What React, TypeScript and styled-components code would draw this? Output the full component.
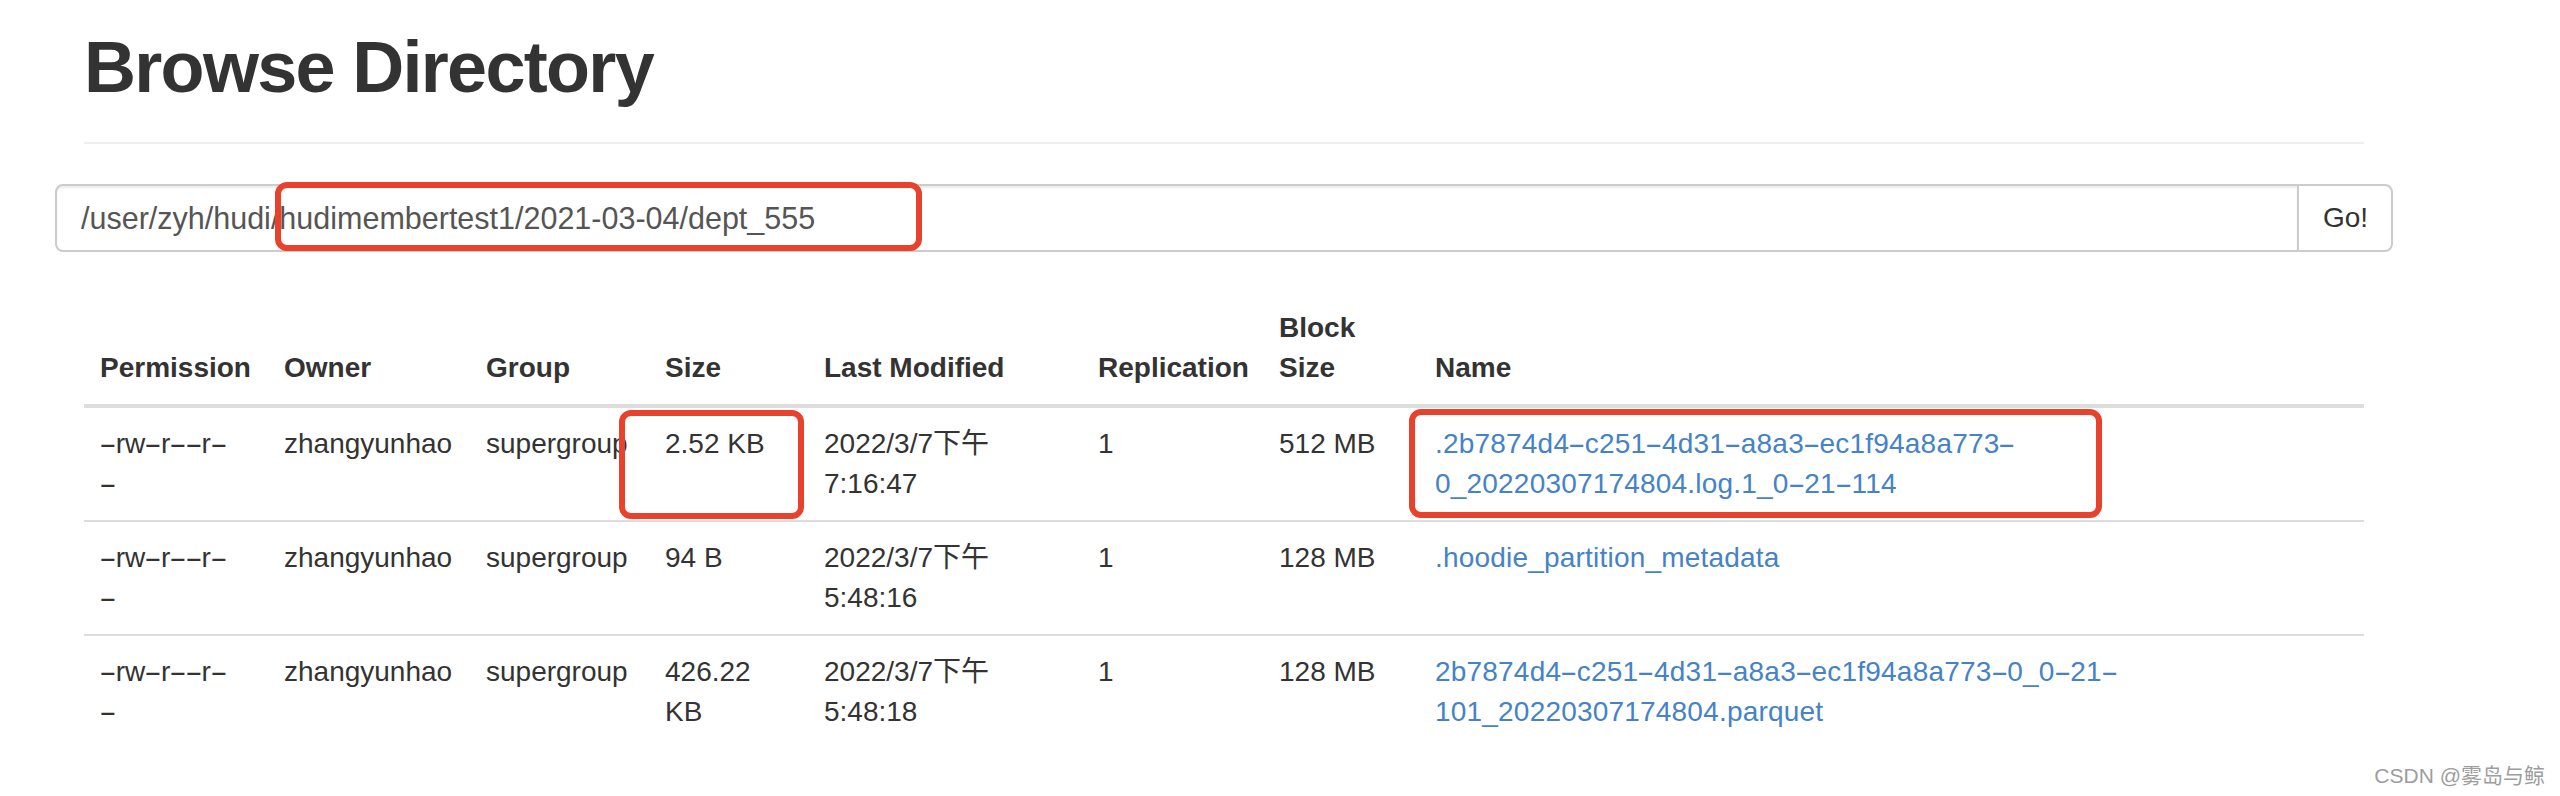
import React from "react";
import styled, { createGlobalStyle } from "styled-components";

const GlobalStyle = createGlobalStyle`
  html, body {
    margin: 0;
    padding: 0;
    background: #ffffff;
  }
  body {
    font-family: "Liberation Sans", "Noto Sans CJK SC", Arial, sans-serif;
    font-size: 28px;
    line-height: 40px;
    color: #333333;
  }
  * { box-sizing: border-box; }
`;

const Page = styled.div`
  position: relative;
  width: 2560px;
  height: 796px;
  overflow: hidden;
`;

const Container = styled.div`
  margin-left: 84px;
  width: 2280px;
`;

const PageHeader = styled.div`
  padding-top: 28px;
  padding-bottom: 35px;
  border-bottom: 2px solid #eeeeee;
`;

const Title = styled.h1`
  margin: 0;
  font-family: "Liberation Sans", Arial, sans-serif;
  font-weight: 700;
  font-size: 72px;
  line-height: 79px;
  letter-spacing: -1.7px;
  color: #333333;
`;

const SearchRow = styled.form`
  display: flex;
  margin: 40px -29px 0 -29px;
  height: 68px;
`;

const PathInput = styled.input`
  flex: 1;
  height: 68px;
  margin: 0;
  padding: 0 24px;
  border: 2px solid #cccccc;
  border-right: none;
  border-radius: 8px 0 0 8px;
  font-family: "Liberation Sans", Arial, sans-serif;
  font-size: 30.5px;
  color: #555555;
  background: #ffffff;
  box-shadow: inset 0 2px 2px rgba(0, 0, 0, 0.075);
  outline: none;
`;

const GoButton = styled.button`
  width: 96px;
  height: 68px;
  margin: 0;
  padding: 0 24px;
  border: 2px solid #cccccc;
  border-radius: 0 8px 8px 0;
  background: #ffffff;
  font-family: "Liberation Sans", Arial, sans-serif;
  font-size: 28px;
  color: #333333;
  cursor: pointer;
`;

const Table = styled.table`
  width: 2280px;
  margin-top: 40px;
  border-collapse: collapse;
  border-spacing: 0;
  table-layout: fixed;
`;

const HeadCell = styled.th`
  padding: 16px;
  text-align: left;
  vertical-align: bottom;
  font-weight: 700;
  font-size: 28px;
  line-height: 40px;
  color: #333333;
  border-bottom: 4px solid #dddddd;
  white-space: normal;
`;

const Row = styled.tr`
  & + & > td {
    border-top: 2px solid #dddddd;
  }
`;

const Cell = styled.td`
  padding: 16px;
  vertical-align: top;
  font-size: 28px;
  line-height: 40px;
  color: #333333;
  white-space: nowrap;
`;

const Line = styled.span`
  display: block;
`;

const Dash = styled.span`
  display: inline-block;
  width: 0.56em;
  text-align: center;
  transform: scaleX(1.9);
`;

const NameLink = styled.a`
  display: inline-block;
  color: #4583c6;
  text-decoration: none;
  letter-spacing: 0.2px;
`;

const Annotation = styled.div`
  position: absolute;
  border: 6px solid #e8412c;
  border-radius: 12px;
  pointer-events: none;
`;

const Watermark = styled.div`
  position: absolute;
  right: 15px;
  top: 764px;
  font-family: "Liberation Sans", "Noto Sans CJK SC", sans-serif;
  font-size: 21px;
  line-height: 24px;
  color: #9d9d9d;
  text-shadow: 0 0 1px #ffffff;
`;

type FileRow = {
  perm: string[];
  owner: string;
  group: string;
  size: string[];
  date: string[];
  repl: string;
  block: string;
  name: string[];
};

const rows: FileRow[] = [
  {
    perm: ["-rw-r--r-", "-"],
    owner: "zhangyunhao",
    group: "supergroup",
    size: ["2.52 KB"],
    date: ["2022/3/7下午", "7:16:47"],
    repl: "1",
    block: "512 MB",
    name: [".2b7874d4-c251-4d31-a8a3-ec1f94a8a773-", "0_20220307174804.log.1_0-21-114"],
  },
  {
    perm: ["-rw-r--r-", "-"],
    owner: "zhangyunhao",
    group: "supergroup",
    size: ["94 B"],
    date: ["2022/3/7下午", "5:48:16"],
    repl: "1",
    block: "128 MB",
    name: [".hoodie_partition_metadata"],
  },
  {
    perm: ["-rw-r--r-", "-"],
    owner: "zhangyunhao",
    group: "supergroup",
    size: ["426.22", "KB"],
    date: ["2022/3/7下午", "5:48:18"],
    repl: "1",
    block: "128 MB",
    name: ["2b7874d4-c251-4d31-a8a3-ec1f94a8a773-0_0-21-", "101_20220307174804.parquet"],
  },
];

const columns = [
  { label: "Permission", width: 184 },
  { label: "Owner", width: 202 },
  { label: "Group", width: 179 },
  { label: "Size", width: 159 },
  { label: "Last Modified", width: 274 },
  { label: "Replication", width: 181 },
  { label: "Block Size", width: 156 },
  { label: "Name", width: 945 },
];

const withDashes = (text: string) =>
  text.split(/(-)/).map((part, i) =>
    part === "-" ? <Dash key={i}>-</Dash> : <React.Fragment key={i}>{part}</React.Fragment>
  );

const Lines: React.FC<{ lines: string[]; dashed?: boolean }> = ({ lines, dashed }) => (
  <>
    {lines.map((l, i) => (
      <Line key={i}>{dashed ? withDashes(l) : l}</Line>
    ))}
  </>
);

const boxes = [
  { left: 275, top: 182, width: 647, height: 69 },
  { left: 619, top: 410, width: 185, height: 109 },
  { left: 1409, top: 409, width: 693, height: 109 },
];

export default function App() {
  return (
    <Page>
      <GlobalStyle />
      <Container>
        <PageHeader>
          <Title>Browse Directory</Title>
        </PageHeader>
        <SearchRow onSubmit={(e) => e.preventDefault()}>
          <PathInput defaultValue="/user/zyh/hudi/hudimembertest1/2021-03-04/dept_555" />
          <GoButton type="submit">Go!</GoButton>
        </SearchRow>
        <Table>
          <colgroup>
            {columns.map((c) => (
              <col key={c.label} style={{ width: c.width }} />
            ))}
          </colgroup>
          <thead>
            <tr>
              {columns.map((c) => (
                <HeadCell key={c.label}>{c.label}</HeadCell>
              ))}
            </tr>
          </thead>
          <tbody>
            {rows.map((r, i) => (
              <Row key={i}>
                <Cell>
                  <Lines lines={r.perm} dashed />
                </Cell>
                <Cell>{r.owner}</Cell>
                <Cell>{r.group}</Cell>
                <Cell>
                  <Lines lines={r.size} />
                </Cell>
                <Cell>
                  <Lines lines={r.date} />
                </Cell>
                <Cell>{r.repl}</Cell>
                <Cell>{r.block}</Cell>
                <Cell>
                  <NameLink href="#">
                    <Lines lines={r.name} dashed />
                  </NameLink>
                </Cell>
              </Row>
            ))}
          </tbody>
        </Table>
      </Container>
      {boxes.map((b, i) => (
        <Annotation
          key={i}
          style={{ left: b.left, top: b.top, width: b.width, height: b.height }}
        />
      ))}
      <Watermark>CSDN @雾岛与鲸</Watermark>
    </Page>
  );
}
